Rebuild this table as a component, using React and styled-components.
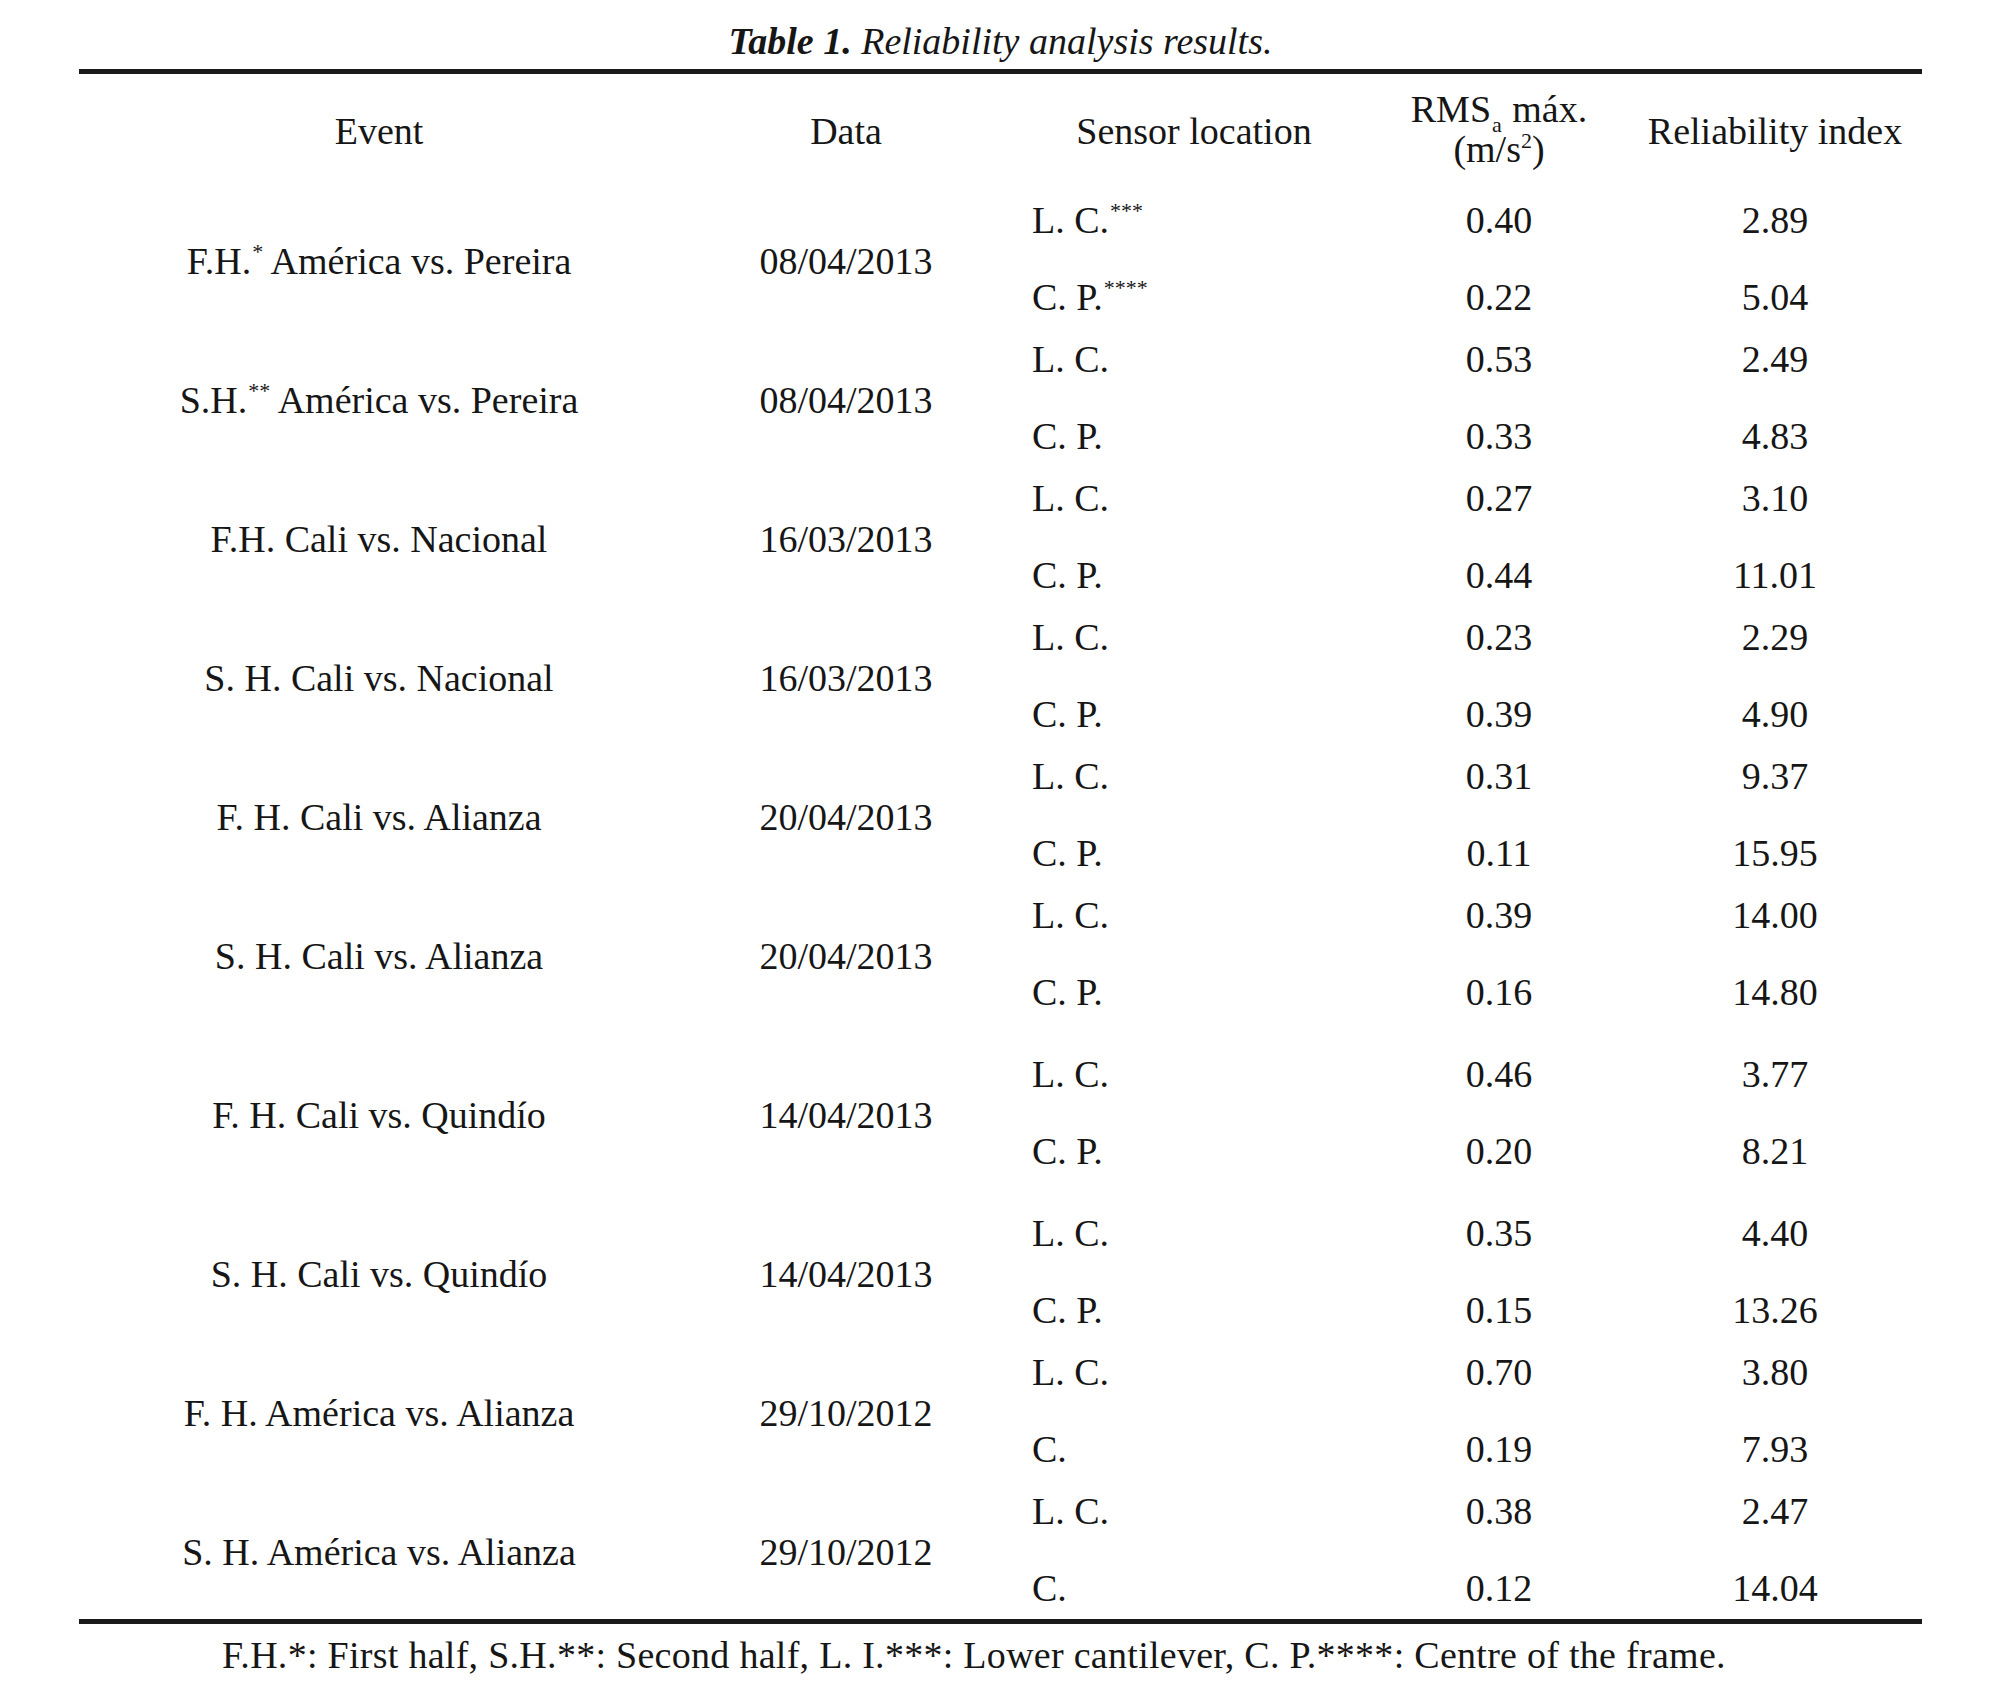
import React from "react"
import styled, { createGlobalStyle } from "styled-components"

const GlobalStyle = createGlobalStyle`
  html, body {
    margin: 0;
    padding: 0;
    background: #fff;
  }
  body {
    font-family: "Liberation Serif", "Times New Roman", serif;
    color: #161616;
  }
`

const rows = [
  { event: "F.H.", mark: "*", date: "08/04/2013", a: ["L. C.", "***", "0.40", "2.89"], b: ["C. P.", "****", "0.22", "5.04"] },
  { event: "S.H.", mark: "**", date: "08/04/2013", a: ["L. C.", "", "0.53", "2.49"], b: ["C. P.", "", "0.33", "4.83"], rest: " América vs. Pereira" },
  { event: "F.H. Cali vs. Nacional", date: "16/03/2013", a: ["L. C.", "", "0.27", "3.10"], b: ["C. P.", "", "0.44", "11.01"] },
  { event: "S. H. Cali vs. Nacional", date: "16/03/2013", a: ["L. C.", "", "0.23", "2.29"], b: ["C. P.", "", "0.39", "4.90"] },
  { event: "F. H. Cali vs. Alianza", date: "20/04/2013", a: ["L. C.", "", "0.31", "9.37"], b: ["C. P.", "", "0.11", "15.95"] },
  { event: "S. H. Cali vs. Alianza", date: "20/04/2013", a: ["L. C.", "", "0.39", "14.00"], b: ["C. P.", "", "0.16", "14.80"], extra: true },
  { event: "F. H. Cali vs. Quindío", date: "14/04/2013", a: ["L. C.", "", "0.46", "3.77"], b: ["C. P.", "", "0.20", "8.21"], extra: true },
  { event: "S. H. Cali vs. Quindío", date: "14/04/2013", a: ["L. C.", "", "0.35", "4.40"], b: ["C. P.", "", "0.15", "13.26"] },
  { event: "F. H. América vs. Alianza", date: "29/10/2012", a: ["L. C.", "", "0.70", "3.80"], b: ["C.", "", "0.19", "7.93"] },
  { event: "S. H. América vs. Alianza", date: "29/10/2012", a: ["L. C.", "", "0.38", "2.47"], b: ["C.", "", "0.12", "14.04"] },
]

const App = () => {
  return (
    <>
      <GlobalStyle />
      <Page>
        <Caption>
          <b>Table 1.</b> Reliability analysis results.
        </Caption>
        <Rule />
        <HeaderRow>
          <HeadCell>Event</HeadCell>
          <HeadCell>Data</HeadCell>
          <HeadCell>Sensor location</HeadCell>
          <HeadCell $tall>
            <span>RMS<Sub>a</Sub> máx.</span>
            <span>(m/s<Sup>2</Sup>)</span>
          </HeadCell>
          <HeadCell $shift>Reliability index</HeadCell>
        </HeaderRow>

        <Body>
          {rows.map((r, i) => (
            <Group key={i} $extra={r.extra}>
              <EventCell>
                {r.mark ? (
                  <>
                    {r.event}<Star>{r.mark}</Star>{r.rest || " América vs. Pereira"}
                  </>
                ) : r.event}
              </EventCell>
              <DateCell>{r.date}</DateCell>
              {[r.a, r.b].map((s, j) => (
                <React.Fragment key={j}>
                  <SensorCell $row={j + 1}>
                    {s[0]}{s[1] && <Star>{s[1]}</Star>}
                  </SensorCell>
                  <NumCell $row={j + 1} $col={4}>{s[2]}</NumCell>
                  <NumCell $row={j + 1} $col={5} $shift>{s[3]}</NumCell>
                </React.Fragment>
              ))}
            </Group>
          ))}
        </Body>
        <Rule />
        <Footnote>
          F.H.*: First half, S.H.**: Second half, L. I.***: Lower cantilever, C. P.****: Centre of the frame.
        </Footnote>
      </Page>
    </>
  )
}

export default App

const Page = styled.div`
  width: 1843px;
  margin: 0 auto;
  padding-top: 22px;
  padding-left: 1px;
  font-size: 38px;
  line-height: 38px;
`

const Caption = styled.div`
  text-align: center;
  font-style: italic;
  margin-bottom: 9px;

  b {
    font-weight: 700;
  }
`

const Rule = styled.div`
  height: 5px;
  background: #1a1a1a;
`

const columns = "600px 334px 362px 248px 1fr"

const HeaderRow = styled.div`
  display: grid;
  grid-template-columns: ${columns};
  align-items: center;
  height: 80px;
  margin-top: 15px;
  margin-bottom: 20px;
`

const HeadCell = styled.div`
  display: flex;
  flex-direction: column;
  align-items: center;
  line-height: 40px;
  padding-top: ${p => (p.$tall ? "0" : "4px")};
  padding-left: ${p => (p.$shift ? "5px" : "0")};
  white-space: nowrap;
`

const Sub = styled.sub`
  font-size: 22px;
  line-height: 0;
  vertical-align: -10px;
  margin: 0 1px;
`

const Sup = styled.sup`
  font-size: 22px;
  line-height: 0;
  vertical-align: 14px;
`

const Star = styled.sup`
  font-size: 22px;
  line-height: 0;
  vertical-align: 15px;
  margin-left: 1px;
`

const Body = styled.div`
  display: flex;
  flex-direction: column;
`

const Group = styled.div`
  display: grid;
  grid-template-columns: ${columns};
  grid-template-rows: 62px 62px;
  row-gap: 15px;
  padding-bottom: ${p => (p.$extra ? "20px" : "0")};
  line-height: 62px;
  white-space: nowrap;
`

const EventCell = styled.div`
  grid-column: 1;
  grid-row: 1 / 3;
  align-self: center;
  text-align: center;
  line-height: 38px;
  padding-top: 4px;
`

const DateCell = styled(EventCell)`
  grid-column: 2;
`

const SensorCell = styled.div`
  grid-column: 3;
  grid-row: ${p => p.$row};
  padding-left: 19px;
`

const NumCell = styled.div`
  grid-column: ${p => p.$col};
  grid-row: ${p => p.$row};
  text-align: center;
  padding-left: ${p => (p.$shift ? "5px" : "0")};
`

const Footnote = styled.div`
  margin-top: 12px;
  padding-left: 143px;
  letter-spacing: 0.28px;
`
